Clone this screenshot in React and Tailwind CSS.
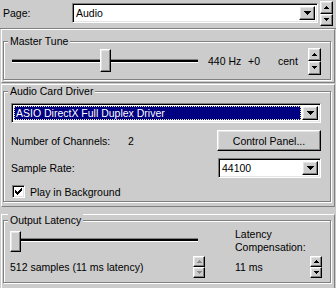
const RAISED =
  "border border-t-white border-l-white border-r-black border-b-black shadow-[inset_-1px_-1px_0_#808080,inset_1px_1px_0_#e4e4e4] bg-[#cccccc]";
const SUNKEN =
  "border border-t-[#808080] border-l-[#808080] border-r-white border-b-white shadow-[inset_1px_1px_0_#000,inset_-1px_-1px_0_#e4e4e4]";
const GROUP =
  "relative box-border border border-[#808080] shadow-[inset_1px_1px_0_#fff,1px_1px_0_#fff] flex flex-col";
const PANEL =
  "box-border ml-[1px] w-[334px] border border-t-white border-l-white border-r-[#808080] border-b-[#808080] flex flex-col shrink-0";

function Arrow({ dir = "down", size = 7, color = "#000" }) {
  const rows = [];
  const n = Math.ceil(size / 2);
  for (let i = 0; i < n; i++) {
    const y = dir === "down" ? i : n - 1 - i;
    rows.push(<rect key={i} x={i} y={y} width={size - 2 * i} height={1} fill={color} />);
  }
  return (
    <svg width={size} height={n} viewBox={`0 0 ${size} ${n}`} shapeRendering="crispEdges">
      {rows}
    </svg>
  );
}

function Spin({ className = "", disabled = false }) {
  const c = disabled ? "#8a8a8a" : "#000";
  return (
    <div className={"flex flex-col " + className}>
      <div className={"flex-1 flex items-center justify-center " + RAISED}>
        <Arrow dir="up" size={5} color={c} />
      </div>
      <div className={"flex-1 flex items-center justify-center " + RAISED}>
        <Arrow dir="down" size={5} color={c} />
      </div>
    </div>
  );
}

function DropBtn() {
  return (
    <div className={"w-[16px] h-full flex items-center justify-center " + RAISED}>
      <Arrow dir="down" size={7} />
    </div>
  );
}

function Combo({ className = "", text, selected = false }) {
  return (
    <div className={"flex bg-white " + SUNKEN + " " + className}>
      <div className="flex-1 flex p-[2px] pr-[1px]">
        {selected ? (
          <div className="flex-1 flex items-center bg-[#000080] text-white border border-dotted border-[#e8e8b0] pl-[1px]">
            {text}
          </div>
        ) : (
          <div className="flex-1 flex items-center pl-[1px]">{text}</div>
        )}
      </div>
      <div className="py-[2px] pr-[2px]">
        <DropBtn />
      </div>
    </div>
  );
}

function Thumb({ className = "" }) {
  return <div className={"absolute " + RAISED + " " + className} />;
}

function Track({ className = "" }) {
  return (
    <div
      className={
        "h-[4px] border-t border-t-[#808080] border-b border-b-white bg-[#000] " + className
      }
    />
  );
}

function Title({ children }) {
  return (
    <span className="self-start ml-[4px] px-[2px] -mt-[7px] bg-[#cccccc] leading-[12px] h-[12px]">
      {children}
    </span>
  );
}

function Check() {
  return (
    <div className={"w-[13px] h-[13px] bg-white flex items-center justify-center " + SUNKEN}>
      <svg width="7" height="7" viewBox="0 0 7 7" shapeRendering="crispEdges">
        <path
          d="M6 0h1v3h-1zM5 1h1v3h-1zM4 2h1v3h-1zM3 3h1v3h-1zM2 4h1v3h-1zM1 3h1v3h-1zM0 2h1v3h-1z"
          fill="#000"
        />
      </svg>
    </div>
  );
}

export default function App() {
  return (
    <div className="w-[336px] h-[288px] bg-[#cccccc] text-black text-[10.5px] leading-[12px] font-['Liberation_Sans',Arial,sans-serif] overflow-hidden flex flex-col">
      {/* Page row */}
      <div className="flex items-start h-[29px] shrink-0 border-b border-b-[#808080]">
        <span className="ml-[3px] mt-[7px] w-[69px]">Page:</span>
        <Combo className="mt-[3px] w-[246px] h-[20px]" text="Audio" />
        <Spin className="ml-[2px] mt-[1px] w-[13px] h-[25px]" />
      </div>

      {/* Master Tune panel */}
      <div className={PANEL + " h-[54px]"}>
        <div className={GROUP + " ml-[1px] w-[328px] h-[39px] mt-[11px] shrink-0"}>
          <Title>Master Tune</Title>
          <div className="flex items-center h-[28px]">
            <div className="relative ml-[8px] w-[186px] h-[28px] flex items-center">
              <Track className="w-full" />
              <Thumb className="left-[88px] top-[2px] w-[11px] h-[23px]" />
            </div>
            <span className="ml-[10px] w-[40px]">440 Hz</span>
            <span className="w-[30px]">+0</span>
            <span className="w-[30px]">cent</span>
            <Spin className="w-[13px] h-[27px]" />
          </div>
        </div>
      </div>

      {/* Audio Card Driver panel */}
      <div className={PANEL + " mt-[1px] h-[123px]"}>
        <div className={GROUP + " ml-[1px] w-[328px] h-[111px] mt-[6px] shrink-0"}>
          <Title>Audio Card Driver</Title>
          <Combo
            className="mt-[6px] ml-[7px] w-[310px] h-[20px]"
            text="ASIO DirectX Full Duplex Driver"
            selected
          />
          <div className="flex items-center mt-[7px] h-[21px]">
            <span className="ml-[7px] w-[117px]">Number of Channels:</span>
            <span className="w-[89px]">2</span>
            <div className={"w-[104px] h-[21px] flex items-center justify-center " + RAISED}>
              Control Panel...
            </div>
          </div>
          <div className="flex items-center mt-[7px] h-[20px]">
            <span className="ml-[7px] w-[207px]">Sample Rate:</span>
            <Combo className="w-[103px] h-[20px]" text="44100" />
          </div>
          <div className="flex items-center mt-[7px] h-[13px]">
            <div className="ml-[8px]">
              <Check />
            </div>
            <span className="ml-[5px]">Play in Background</span>
          </div>
        </div>
      </div>

      {/* Output Latency panel */}
      <div className={PANEL + " mt-[7px] h-[74px] border-b-0"}>
        <div className={GROUP + " ml-[1px] w-[328px] h-[63px] mt-[5px] shrink-0"}>
          <Title>Output Latency</Title>
          <div className="flex">
            <div className="ml-[6px] w-[196px] flex flex-col">
              <div className="relative mt-[5px] h-[21px] pt-[7px] pl-[6px] pr-[8px]">
                <Track />
                <Thumb className="left-0 top-0 w-[11px] h-[21px]" />
              </div>
              <div className="flex items-center mt-[4px] h-[22px]">
                <span className="w-[183px]">512 samples (11 ms latency)</span>
                <Spin className="w-[12px] h-[22px]" disabled />
              </div>
            </div>
            <div className="ml-[29px] flex flex-col">
              <div className="mt-[2px] leading-[13px]">
                <div>Latency</div>
                <div>Compensation:</div>
              </div>
              <div className="flex items-center mt-[2px] h-[22px]">
                <span className="w-[75px]">11 ms</span>
                <Spin className="w-[12px] h-[22px]" />
              </div>
            </div>
          </div>
        </div>
      </div>
    </div>
  );
}
